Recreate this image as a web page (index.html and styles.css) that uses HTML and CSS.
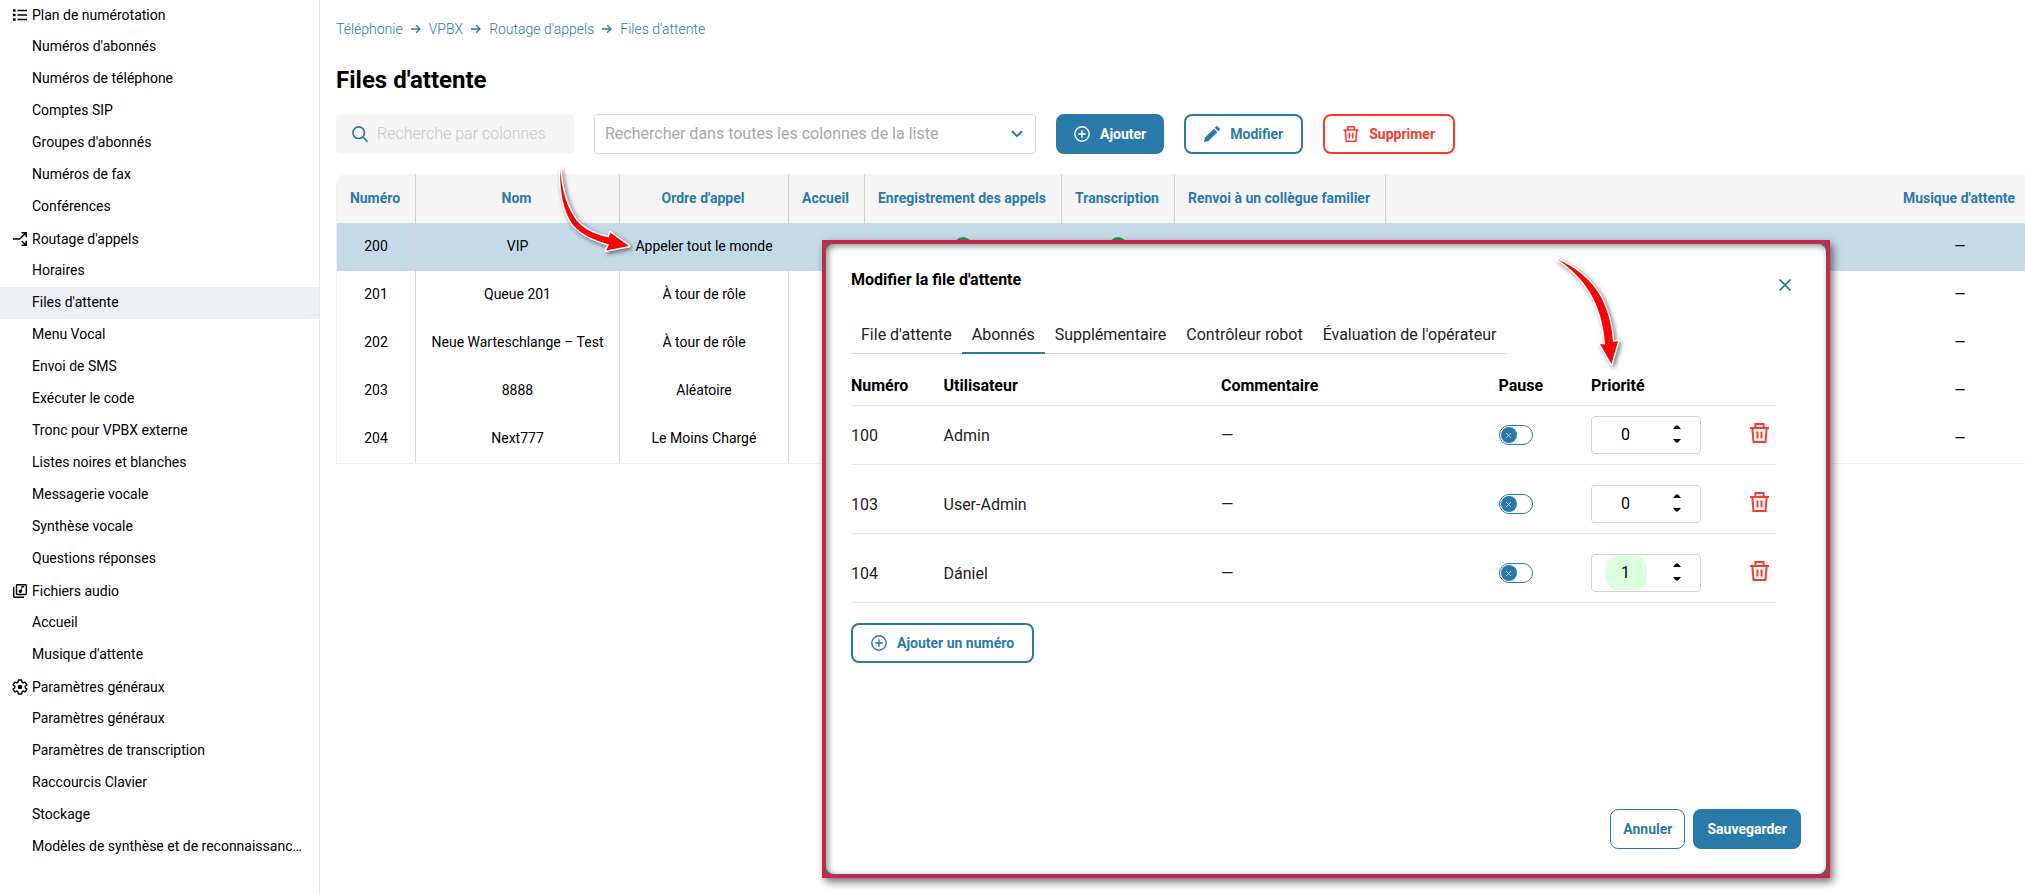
FILE: index.html
```html
<!DOCTYPE html>
<html lang="fr">
<head>
  <meta charset="UTF-8">
  <meta name="viewport" content="width=device-width, initial-scale=1.0">
  <title>Files d'attente</title>
  <link rel="stylesheet" href="styles.css">
</head>
<body>

  <!-- shared icons -->
  <svg class="sprite" aria-hidden="true">
    <symbol id="i-plus" viewBox="0 0 16 16"><g fill="none" stroke="currentColor" stroke-width="1.4"><circle cx="8" cy="8" r="7.2"/><path d="M8 4.2v7.6M4.2 8h7.6"/></g></symbol>
    <symbol id="i-trash" viewBox="0 0 19 20"><g fill="none" stroke="currentColor" stroke-width="2"><path d="M0 5h19M5.4 5V1h8.2v4M2.3 5l1.2 14h12L16.700 5M7.500 8.500v7M11.500 8.500v7"/></g></symbol>
    <symbol id="i-arrow" viewBox="0 0 10 10"><path d="M0 5h9M5.200 1.200L9 5 5.200 8.800" fill="none" stroke="currentColor" stroke-width="1.300"/></symbol>
    <symbol id="i-cross" viewBox="0 0 12 12"><path d="M.5.5l11 11M11.500.5l-11 11" fill="none" stroke="currentColor" stroke-width="1.700"/></symbol>
    <symbol id="i-up" viewBox="0 0 8 4"><path d="M0 4l3-3.500h2L8 4z" fill="currentColor"/></symbol>
    <symbol id="i-down" viewBox="0 0 8 4"><path d="M0 0l3 3.500h2L8 0z" fill="currentColor"/></symbol>
  </svg>

  <div class="layout">
    <nav class="sidebar">
      <h2 class="group">
        <svg width="14" height="12" viewBox="0 0 14 12"><path d="M0 .2h2.600v2.600H0zM0 4.700h2.600v2.600H0zM0 9.200h2.600v2.600H0zM4.500.8H14v1.400H4.500zM4.500 5.300H14v1.400H4.500zM4.500 9.800H14v1.400H4.500z"/></svg>
        Plan de numérotation
      </h2>
      <a href="#">Numéros d'abonnés</a>
      <a href="#">Numéros de téléphone</a>
      <a href="#">Comptes SIP</a>
      <a href="#">Groupes d'abonnés</a>
      <a href="#">Numéros de fax</a>
      <a href="#">Conférences</a>

      <h2 class="group">
        <svg width="14" height="14" viewBox="0 0 14 14"><path d="M0 7h6.500L13 .9M8.500.8h4.700v4.500M8.800 9l4.200 4.200M8.500 13.200h4.700V8.700" fill="none" stroke="#000" stroke-width="1.500"/></svg>
        Routage d'appels
      </h2>
      <a href="#">Horaires</a>
      <a href="#" class="active">Files d'attente</a>
      <a href="#">Menu Vocal</a>
      <a href="#">Envoi de SMS</a>
      <a href="#">Exécuter le code</a>
      <a href="#">Tronc pour VPBX externe</a>
      <a href="#">Listes noires et blanches</a>
      <a href="#">Messagerie vocale</a>
      <a href="#">Synthèse vocale</a>
      <a href="#">Questions réponses</a>

      <h2 class="group">
        <svg width="14" height="14" viewBox="2 2 20 20"><path d="M20 2H8c-1.100 0-2 .9-2 2v12c0 1.100.9 2 2 2h12c1.100 0 2-.9 2-2V4c0-1.100-.9-2-2-2zm0 14H8V4h12v12zm-7.500-1c1.380 0 2.500-1.120 2.500-2.500V7h3V5h-4v5.510c-.42-.32-.93-.51-1.500-.51-1.380 0-2.500 1.120-2.500 2.500s1.120 2.500 2.500 2.500zM4 6H2v14c0 1.100.9 2 2 2h14v-2H4V6z"/></svg>
        Fichiers audio
      </h2>
      <a href="#">Accueil</a>
      <a href="#">Musique d'attente</a>

      <h2 class="group">
        <svg width="14" height="14" viewBox="2 2 20 20"><path d="M19.430 12.980c.04-.32.07-.64.07-.98s-.03-.66-.07-.98l2.110-1.650c.19-.15.24-.42.12-.64l-2-3.460c-.12-.22-.39-.3-.61-.22l-2.490 1c-.52-.4-1.080-.73-1.690-.98l-.38-2.650C14.460 2.180 14.250 2 14 2h-4c-.25 0-.46.18-.49.42l-.38 2.650c-.61.25-1.170.59-1.690.98l-2.490-1c-.23-.09-.49 0-.61.22l-2 3.460c-.13.22-.07.49.12.64l2.110 1.650c-.04.32-.07.65-.07.98s.03.66.07.98l-2.110 1.650c-.19.15-.24.42-.12.64l2 3.460c.12.22.39.3.61.22l2.490-1c.52.4 1.080.73 1.690.98l.38 2.650c.03.24.24.42.49.42h4c.25 0 .46-.18.49-.42l.38-2.650c.61-.25 1.170-.59 1.690-.98l2.490 1c.23.09.49 0 .61-.22l2-3.460c.12-.22.07-.49-.12-.64l-2.110-1.650z" fill="none" stroke="#000" stroke-width="2"/><circle cx="12" cy="12" r="3.300"/></svg>
        Paramètres généraux
      </h2>
      <a href="#">Paramètres généraux</a>
      <a href="#">Paramètres de transcription</a>
      <a href="#">Raccourcis Clavier</a>
      <a href="#">Stockage</a>
      <a href="#">Modèles de synthèse et de reconnaissanc…</a>
    </nav>

    <main class="content">
      <div class="breadcrumb">
        <a href="#">Téléphonie</a>
        <svg width="10" height="10"><use href="#i-arrow"/></svg>
        <a href="#">VPBX</a>
        <svg width="10" height="10"><use href="#i-arrow"/></svg>
        <a href="#">Routage d'appels</a>
        <svg width="10" height="10"><use href="#i-arrow"/></svg>
        <a href="#">Files d'attente</a>
      </div>

      <h1>Files d'attente</h1>

      <div class="toolbar">
        <label class="search">
          <svg width="16" height="16" viewBox="0 0 16 16"><g fill="none" stroke="currentColor" stroke-width="1.700"><circle cx="6.700" cy="6.700" r="5.800"/><path d="M11 11l4.600 4.600"/></g></svg>
          <input type="text" placeholder="Recherche par colonnes" aria-label="Recherche par colonnes">
        </label>
        <label class="select">
          <select aria-label="Colonnes">
            <option>Rechercher dans toutes les colonnes de la liste</option>
          </select>
          <svg width="12" height="8" viewBox="0 0 12 8"><path d="M1 1.200l5 5 5-5" fill="none" stroke="currentColor" stroke-width="2"/></svg>
        </label>
        <button class="btn btn-primary"><svg width="16" height="16"><use href="#i-plus"/></svg>Ajouter</button>
        <button class="btn"><svg width="16" height="16" viewBox="0 0 16 16"><path d="M0 16l.8-4.300L9.800 2.700l3.500 3.500-9 9zM10.700 1.800L12 .5a1.200 1.200 0 0 1 1.700 0L15.500 2.300a1.200 1.200 0 0 1 0 1.700l-1.300 1.300z" fill="currentColor"/></svg>Modifier</button>
        <button class="btn btn-danger"><svg width="16" height="16"><use href="#i-trash"/></svg>Supprimer</button>
      </div>

      <table class="queues">
        <colgroup>
          <col class="c-num"><col class="c-name"><col class="c-order"><col class="c-home"><col class="c-rec"><col class="c-trans"><col class="c-back"><col><col class="c-music">
        </colgroup>
        <thead>
          <tr>
            <th>Numéro</th><th>Nom</th><th>Ordre d'appel</th><th>Accueil</th><th>Enregistrement des appels</th><th>Transcription</th><th>Renvoi à un collègue familier</th><th></th><th>Musique d'attente</th>
          </tr>
        </thead>
        <tbody>
          <tr class="selected"><td>200</td><td>VIP</td><td>Appeler tout le monde</td><td></td><td><span class="dot"></span></td><td><span class="dot"></span></td><td></td><td></td><td>—</td></tr>
          <tr><td>201</td><td>Queue 201</td><td>À tour de rôle</td><td></td><td></td><td></td><td></td><td></td><td>—</td></tr>
          <tr><td>202</td><td>Neue Warteschlange – Test</td><td>À tour de rôle</td><td></td><td></td><td></td><td></td><td></td><td>—</td></tr>
          <tr><td>203</td><td>8888</td><td>Aléatoire</td><td></td><td></td><td></td><td></td><td></td><td>—</td></tr>
          <tr><td>204</td><td>Next777</td><td>Le Moins Chargé</td><td></td><td></td><td></td><td></td><td></td><td>—</td></tr>
        </tbody>
      </table>
    </main>
  </div>

  <!-- modal -->
  <div class="frame">
    <section class="dialog" role="dialog" aria-labelledby="dialog-title">
      <header class="dialog-head">
        <h2 id="dialog-title">Modifier la file d'attente</h2>
        <button class="close" aria-label="Fermer"><svg width="12" height="12"><use href="#i-cross"/></svg></button>
      </header>

      <div class="tabs" role="tablist">
        <button role="tab">File d'attente</button>
        <button role="tab" aria-selected="true" class="current">Abonnés</button>
        <button role="tab">Supplémentaire</button>
        <button role="tab">Contrôleur robot</button>
        <button role="tab">Évaluation de l'opérateur</button>
      </div>

      <table class="members">
        <colgroup><col class="m-10"><col class="m-30"><col class="m-30"><col class="m-10"><col class="m-14"><col></colgroup>
        <thead>
          <tr><th>Numéro</th><th>Utilisateur</th><th>Commentaire</th><th>Pause</th><th>Priorité</th><th></th></tr>
        </thead>
        <tbody>
          <tr>
            <td>100</td><td>Admin</td><td>—</td>
            <td><label class="toggle"><input type="checkbox" aria-label="Pause 100"><span><svg width="5" height="5"><use href="#i-cross"/></svg></span></label></td>
            <td>
              <div class="number">
                <input type="number" value="0" aria-label="Priorité 100">
                <div class="steps">
                  <button aria-label="Plus"><svg width="8" height="4"><use href="#i-up"/></svg></button>
                  <button aria-label="Moins"><svg width="8" height="4"><use href="#i-down"/></svg></button>
                </div>
              </div>
            </td>
            <td><button class="delete" aria-label="Supprimer 100"><svg width="19" height="20"><use href="#i-trash"/></svg></button></td>
          </tr>
          <tr>
            <td>103</td><td>User-Admin</td><td>—</td>
            <td><label class="toggle"><input type="checkbox" aria-label="Pause 103"><span><svg width="5" height="5"><use href="#i-cross"/></svg></span></label></td>
            <td>
              <div class="number">
                <input type="number" value="0" aria-label="Priorité 103">
                <div class="steps">
                  <button aria-label="Plus"><svg width="8" height="4"><use href="#i-up"/></svg></button>
                  <button aria-label="Moins"><svg width="8" height="4"><use href="#i-down"/></svg></button>
                </div>
              </div>
            </td>
            <td><button class="delete" aria-label="Supprimer 103"><svg width="19" height="20"><use href="#i-trash"/></svg></button></td>
          </tr>
          <tr>
            <td>104</td><td>Dániel</td><td>—</td>
            <td><label class="toggle"><input type="checkbox" aria-label="Pause 104"><span><svg width="5" height="5"><use href="#i-cross"/></svg></span></label></td>
            <td>
              <div class="number">
                <input type="number" value="1" class="changed" aria-label="Priorité 104">
                <div class="steps">
                  <button aria-label="Plus"><svg width="8" height="4"><use href="#i-up"/></svg></button>
                  <button aria-label="Moins"><svg width="8" height="4"><use href="#i-down"/></svg></button>
                </div>
              </div>
            </td>
            <td><button class="delete" aria-label="Supprimer 104"><svg width="19" height="20"><use href="#i-trash"/></svg></button></td>
          </tr>
        </tbody>
      </table>

      <button class="btn btn-add"><svg width="16" height="16"><use href="#i-plus"/></svg>Ajouter un numéro</button>

      <footer class="dialog-foot">
        <button class="btn btn-thin">Annuler</button>
        <button class="btn btn-primary btn-save">Sauvegarder</button>
      </footer>
    </section>
  </div>

  <!-- red pointers -->
  <svg class="pointer pointer-order" width="90" height="100" viewBox="550 160 90 100" aria-hidden="true">
    <path d="M560 169C562 191 567 208 577 221C586 231 597 235 609 237.500L610 232.500L629 246L606 250.500L609 244.500C593 240 581 234 573 225C563 211 560 192 560 169z"/>
  </svg>
  <svg class="pointer pointer-priority" width="80" height="120" viewBox="1550 250 80 120" aria-hidden="true">
    <path d="M1557 259C1575 267 1591 279 1601 297C1609 313 1612 327 1613 342L1618 341L1611.500 364L1600 344L1605 344.500C1604 328 1600 312 1593 298C1584 281 1572 269 1557 259z"/>
  </svg>

</body>
</html>
```

FILE: styles.css
```css
:root{
  --blue: #2a7aa9;
  --red: #fb3a2d;
  --line: #d3d3d3;
  --line-light: #e8e8e8;
}
*{
  box-sizing: border-box;
}
body{
  margin: 0;
  position: relative;
  min-height: 100vh;
  overflow: hidden;
  font-family: Roboto, "Open Sans", sans-serif;
  font-size: 14px;
  color: #000;
  background-color: #fff;
}
h1, h2{
  margin: 0;
}
a{
  text-decoration: none;
}
button, input, select{
  font-family: inherit;
}
button{
  border: none;
  padding: 0;
  background: none;
  cursor: pointer;
}
svg{
  flex-shrink: 0;
  overflow: visible;
}
.sprite{
  position: absolute;
  width: 0;
  height: 0;
}
.layout{
  display: flex;
  min-height: 100vh;
}

/* SIDEBAR */
.sidebar{
  width: 320px;
  flex-shrink: 0;
  border-right: 1px solid var(--line-light);
}
.group{
  display: flex;
  align-items: center;
  gap: 5px;
  height: 32px;
  padding-left: 13px;
  font-size: 14px;
  font-weight: 400;
}
.group:first-child{
  height: 31px;
  padding-bottom: 2px;
}
.sidebar a{
  display: block;
  height: 32px;
  line-height: 30px;
  padding: 0 16px 0 32px;
  color: #000;
  overflow: hidden;
  white-space: nowrap;
  text-overflow: ellipsis;
}
.sidebar .active{
  background-color: #ebf0f3;
}

/* CONTENT */
.content{
  flex: 1;
  min-width: 0;
  padding: 20px 0 0 16px;
}
.breadcrumb{
  display: flex;
  align-items: center;
  gap: 8px;
  height: 18px;
  color: var(--blue);
}
.breadcrumb a{
  color: var(--blue);
  font-weight: 300;
}
h1{
  margin-top: 26px;
  font-size: 24px;
  line-height: 32px;
  font-weight: 700;
}
.toolbar{
  display: flex;
  gap: 20px;
  margin-top: 18px;
  margin-bottom: 20px;
}
.search{
  display: flex;
  align-items: center;
  gap: 9px;
  width: 238px;
  height: 40px;
  padding-left: 16px;
  border-radius: 4px;
  background-color: #f5f5f5;
  color: var(--blue);
}
.search input{
  width: 180px;
  padding: 0 0 2px;
  border: none;
  outline: none;
  background: none;
  font-size: 16px;
  font-weight: 300;
}
.search input::placeholder{
  color: #c8c8c8;
}
.select{
  display: flex;
  align-items: center;
  width: 442px;
  height: 40px;
  padding: 0 12px 0 10px;
  border: 1px solid var(--line);
  border-radius: 4px;
  color: var(--blue);
}
.select select{
  flex: 1;
  padding: 0 0 2px;
  border: none;
  outline: none;
  appearance: none;
  background: none;
  font-size: 16px;
  color: #a8a8a8;
}
.btn{
  display: flex;
  align-items: center;
  gap: 10px;
  height: 40px;
  padding: 0 18px;
  border: 2px solid var(--blue);
  border-radius: 8px;
  font-size: 14px;
  line-height: 20px;
  font-weight: 700;
  color: var(--blue);
  background-color: #fff;
}
.btn-primary{
  background-color: var(--blue);
  color: #fff;
  padding: 0 16px;
}
.btn-danger{
  border-color: var(--red);
  color: var(--red);
}

/* QUEUES TABLE */
.queues{
  width: 100%;
  table-layout: fixed;
  border-collapse: separate;
  border-spacing: 0;
  border-left: 1px solid #f0f0f0;
  border-bottom: 1px solid #f0f0f0;
  border-top-left-radius: 10px;
  overflow: hidden;
  text-align: center;
}
.c-num{ width: 79px; }
.c-name{ width: 204px; }
.c-order{ width: 169px; }
.c-home{ width: 76px; }
.c-rec{ width: 197px; }
.c-trans{ width: 113px; }
.c-back{ width: 211px; }
.c-music{ width: 136px; }
.queues th, .queues td{
  padding: 0 0 2px;
  border-right: 1px solid var(--line);
  white-space: nowrap;
}
.queues th{
  height: 49px;
  padding-right: 2px;
  background-color: #f5f5f5;
  color: var(--blue);
  font-weight: 700;
}
.queues td{
  height: 48px;
}
.queues th:nth-child(n+8), .queues td:nth-child(n+8){
  border-right: none;
}
.queues th:last-child, .queues td:last-child{
  padding-left: 6px;
}
.selected td{
  background-color: #c5dae7;
}
.dot{
  display: block;
  width: 18px;
  height: 18px;
  margin: 0 auto;
  border-radius: 50%;
  background-color: #1c9a3c;
}

/* MODAL */
.frame{
  position: absolute;
  left: 822px;
  right: 195px;
  top: 240px;
  bottom: 16px;
  padding: 1px;
  border: 3px solid #d81f43;
  background-color: #5c5f63;
  box-shadow: 3px 4px 8px rgba(0,0,0,.55);
}
.dialog{
  display: flex;
  flex-direction: column;
  height: 100%;
  padding: 22px 25px 25px;
  border-radius: 8px;
  background-color: #fff;
  box-shadow: inset 2px 2px 6px rgba(0,0,0,.45);
}
.dialog-head{
  display: flex;
  justify-content: space-between;
  align-items: flex-start;
  height: 45px;
}
.dialog-head h2{
  font-size: 16px;
  line-height: 28px;
  font-weight: 700;
}
.close{
  width: 32px;
  height: 40px;
  color: var(--blue);
}
.tabs{
  display: flex;
  align-self: flex-start;
  height: 43px;
  border-bottom: 1px solid var(--line);
}
.tabs button{
  height: 43px;
  padding: 5px 10px 0;
  border-bottom: 2px solid transparent;
  font-size: 16px;
  color: #222;
}
.tabs .current{
  border-bottom-color: var(--blue);
}
.members{
  table-layout: fixed;
  border-collapse: separate;
  border-spacing: 0;
  margin-right: 25px;
  font-size: 16px;
  color: #222;
}
.m-10{ width: 10%; }
.m-14{ width: 14%; }
.m-30{ width: 30%; }
.members th{
  height: 52px;
  padding: 12px 0 0;
  border-bottom: 1px solid var(--line-light);
  text-align: left;
  font-weight: 700;
  color: #000;
}
.members td{
  height: 69px;
  padding: 20px 0 10px;
  border-bottom: 1px solid var(--line-light);
}
.members tr:first-child td{
  height: 59px;
  padding-top: 10px;
}
.members td:last-child{
  padding-right: 7px;
  text-align: right;
}
.toggle{
  display: flex;
  position: relative;
  width: 34px;
  height: 20px;
}
.toggle input{
  appearance: none;
  width: 34px;
  height: 20px;
  margin: 0;
  border: 1px solid var(--blue);
  border-radius: 10px;
  background-color: #fff;
}
.toggle span{
  position: absolute;
  left: 2px;
  top: 2px;
  display: flex;
  align-items: center;
  justify-content: center;
  width: 16px;
  height: 16px;
  border-radius: 50%;
  background-color: var(--blue);
  color: #fff;
}
.number{
  display: flex;
  align-items: center;
  justify-content: space-between;
  width: 110px;
  height: 38px;
  padding: 0 15px 0 14px;
  border: 1px solid var(--line);
  border-radius: 4px;
}
.number input{
  width: 41px;
  height: 34px;
  padding: 0 2px 1px 0;
  border: none;
  border-radius: 12px;
  outline: none;
  appearance: textfield;
  background: none;
  text-align: center;
  font-size: 16px;
}
.number input::-webkit-inner-spin-button{
  appearance: none;
  margin: 0;
}
.number .changed{
  background-color: #dcffdc;
}
.steps{
  display: flex;
  flex-direction: column;
  gap: 2px;
  padding-bottom: 2px;
}
.steps button{
  display: flex;
  align-items: center;
  justify-content: center;
  width: 16px;
  height: 12px;
}
.delete{
  display: inline-flex;
  vertical-align: middle;
  padding-bottom: 4px;
  color: var(--red);
}
.btn-add{
  align-self: flex-start;
  margin-top: 20px;
}
.dialog-foot{
  display: flex;
  justify-content: flex-end;
  gap: 8px;
  margin-top: auto;
}
.btn-thin{
  border-width: 1px;
  padding: 0 12px;
}
.btn-save{
  padding: 0 12px;
}

/* POINTERS */
.pointer{
  position: absolute;
  pointer-events: none;
  filter: drop-shadow(2px 2px 2px rgba(0,0,0,.5));
}
.pointer path{
  fill: #fb0007;
  stroke: #fff;
  stroke-width: 3;
  stroke-linejoin: round;
  paint-order: stroke;
}
.pointer-order{
  left: 550px;
  top: 160px;
}
.pointer-priority{
  left: 1550px;
  top: 250px;
}
```
